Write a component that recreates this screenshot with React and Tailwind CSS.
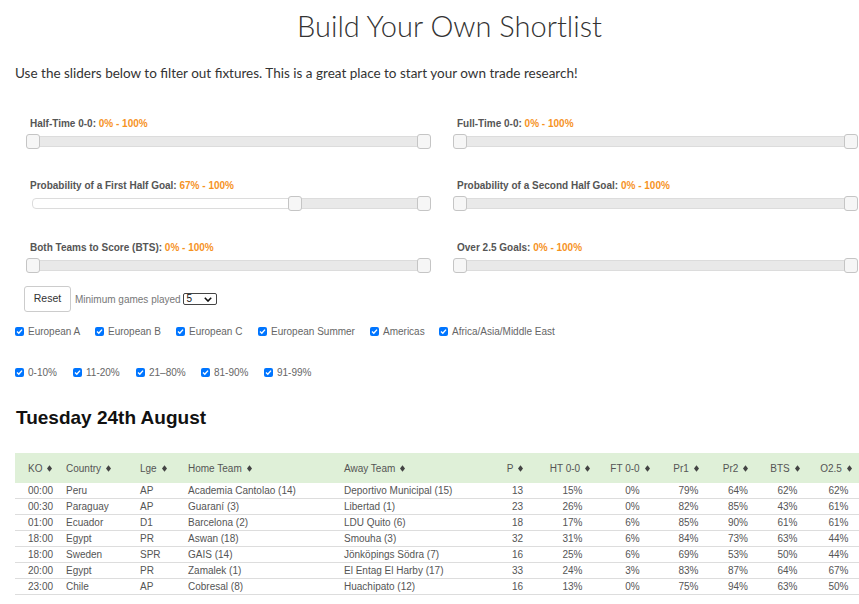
import React from "react";

const COLS = "grid grid-cols-[51px_74px_48px_156px_148px_51px_59px_61px_51px_48px_51px_51px]";

function Diamond() {
  return (
    <svg width="5" height="7" viewBox="0 0 5 7" className="ml-[5px] shrink-0">
      <path d="M2.5 0.2 L5 3.5 L2.5 6.8 L0 3.5 Z" fill="#444" />
    </svg>
  );
}

function Slider({ label, min, max }) {
  return (
    <div>
      <div className="pl-[5px] h-[14px] leading-[14px] mt-[1px] text-[10px] font-bold text-[#555] whitespace-nowrap">
        {label}: <span className="text-[#f6931f]">{min}% - {max}%</span>
      </div>
      <div className="mt-[5px] mx-[7px] relative h-[11px] border border-[#dcdcdc] bg-white rounded-[4px]">
        <div
          className="absolute top-0 bottom-0 bg-[#e9e9e9] rounded-[3px]"
          style={{ left: min + "%", right: 100 - max + "%" }}
        />
        <div
          className="absolute top-[-3px] w-[14px] h-[15px] -ml-[7px] bg-[#f6f6f6] border border-[#c5c5c5] rounded-[3px]"
          style={{ left: min + "%" }}
        />
        <div
          className="absolute top-[-3px] w-[14px] h-[15px] -ml-[7px] bg-[#f6f6f6] border border-[#c5c5c5] rounded-[3px]"
          style={{ left: max + "%" }}
        />
      </div>
    </div>
  );
}

function Check({ label, w }) {
  return (
    <div className="flex items-center shrink-0" style={{ width: w ? w + "px" : undefined }}>
      <span className="w-[9px] h-[9px] rounded-[2px] bg-[#0075ff] flex items-center justify-center shrink-0">
        <svg width="7" height="7" viewBox="0 0 7 7">
          <path d="M1 3.6 L2.8 5.3 L6 1.6" stroke="#fff" strokeWidth="1.4" fill="none" />
        </svg>
      </span>
      <span className="ml-[4px] text-[10px] text-[#666] whitespace-nowrap">{label}</span>
    </div>
  );
}

const rows = [
  ["00:00", "Peru", "AP", "Academia Cantolao (14)", "Deportivo Municipal (15)", "13", "15%", "0%", "79%", "64%", "62%", "62%"],
  ["00:30", "Paraguay", "AP", "Guaraní (3)", "Libertad (1)", "23", "26%", "0%", "82%", "85%", "43%", "61%"],
  ["01:00", "Ecuador", "D1", "Barcelona (2)", "LDU Quito (6)", "18", "17%", "6%", "85%", "90%", "61%", "61%"],
  ["18:00", "Egypt", "PR", "Aswan (18)", "Smouha (3)", "32", "31%", "6%", "84%", "73%", "63%", "44%"],
  ["18:00", "Sweden", "SPR", "GAIS (14)", "Jönköpings Södra (7)", "16", "25%", "6%", "69%", "53%", "50%", "44%"],
  ["20:00", "Egypt", "PR", "Zamalek (1)", "El Entag El Harby (17)", "33", "24%", "3%", "83%", "87%", "64%", "67%"],
  ["23:00", "Chile", "AP", "Cobresal (8)", "Huachipato (12)", "16", "13%", "0%", "75%", "94%", "63%", "50%"],
];

const headers = ["KO", "Country", "Lge", "Home Team", "Away Team", "P", "HT 0-0", "FT 0-0", "Pr1", "Pr2", "BTS", "O2.5"];

export default function App() {
  return (
    <div className="w-full min-h-screen overflow-hidden bg-white font-['Liberation_Sans',Arial,sans-serif] text-[#333]">
      <h1 className="pt-[8px] pl-[40px] leading-[36px] text-center text-[29px] font-light text-[#333] font-['Lato',sans-serif]">
        Build Your Own Shortlist
      </h1>
      <p className="mt-[19px] pl-[15px] leading-[20px] text-[13.5px] text-[#333] font-['Lato',sans-serif]">
        Use the sliders below to filter out fixtures. This is a great place to start your own trade research!
      </p>

      <div className="mt-[33px] pl-[25px] grid grid-cols-[407px_407px] gap-x-[20px] gap-y-[31px]">
        <Slider label="Half-Time 0-0" min={0} max={100} />
        <Slider label="Full-Time 0-0" min={0} max={100} />
        <Slider label="Probability of a First Half Goal" min={67} max={100} />
        <Slider label="Probability of a Second Half Goal" min={0} max={100} />
        <Slider label="Both Teams to Score (BTS)" min={0} max={100} />
        <Slider label="Over 2.5 Goals" min={0} max={100} />
      </div>

      <div className="mt-[15px] ml-[24px] flex items-center h-[26px]">
        <button className="w-[47px] h-[26px] border border-[#ccc] rounded-[3px] bg-white text-[10.5px] text-[#333]">
          Reset
        </button>
        <span className="ml-[4px] text-[10px] text-[#777]">Minimum games played</span>
        <div className="ml-[2px] w-[34px] h-[12px] border border-[#444] rounded-[2px] flex items-center justify-between pl-[3px] pr-[4px] text-[10px] text-[#111]">
          <span className="leading-[10px]">5</span>
          <svg width="8" height="5" viewBox="0 0 8 5">
            <path d="M0.8 0.8 L4 4 L7.2 0.8" stroke="#111" strokeWidth="1.6" fill="none" />
          </svg>
        </div>
      </div>

      <div className="mt-[12px] ml-[15px] flex h-[14px] items-center">
        <Check label="European A" w={80} />
        <Check label="European B" w={81} />
        <Check label="European C" w={82} />
        <Check label="European Summer" w={112} />
        <Check label="Americas" w={69} />
        <Check label="Africa/Asia/Middle East" />
      </div>
      <div className="mt-[27px] ml-[15px] flex h-[14px] items-center">
        <Check label="0-10%" w={58} />
        <Check label="11-20%" w={63} />
        <Check label="21–80%" w={65} />
        <Check label="81-90%" w={63} />
        <Check label="91-99%" />
      </div>

      <h2 className="mt-[27px] ml-[16px] leading-[24px] text-[19px] font-bold text-[#111]">Tuesday 24th August</h2>

      <div className="mt-[23px] ml-[15px] w-[849px]">
        <div className={COLS + " h-[30px] bg-[#dff0d8] text-[10px] text-[#555]"}>
          {headers.map((h, i) => (
            <div
              key={h}
              className={
                "flex items-center " +
                (i === 0 ? "pl-[13px]" : i < 5 ? "" : "justify-center pr-[5px]")
              }
            >
              <span className="whitespace-nowrap">{h}</span>
              <Diamond />
            </div>
          ))}
        </div>
        {rows.map((r, ri) => (
          <div key={ri} className={COLS + " h-[16px] border-b border-[#ddd] items-center text-[10px] text-[#555]"}>
            {r.map((c, i) => (
              <div
                key={i}
                className={
                  "whitespace-nowrap " + (i === 0 ? "pl-[13px]" : i < 5 ? "" : "text-center")
                }
              >
                {c}
              </div>
            ))}
          </div>
        ))}
      </div>
    </div>
  );
}
